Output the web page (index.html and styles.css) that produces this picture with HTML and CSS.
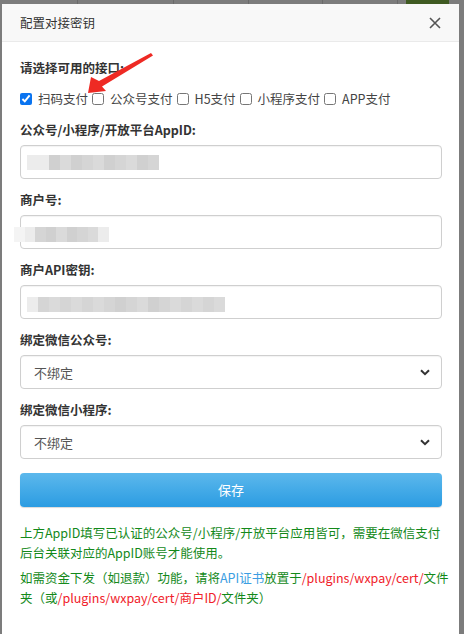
FILE: index.html
```html
<!DOCTYPE html>
<html lang="zh-CN">
<head>
<meta charset="utf-8">
<title>配置对接密钥</title>
<link rel="stylesheet" href="styles.css">
</head>
<body>
<div class="backdrop-strip">
  <div class="cell c1"></div>
  <div class="cell c2"></div>
  <div class="cell c3"></div>
  <div class="cell c4"></div>
  <div class="cell c5"></div>
  <div class="cell c6"></div>
  <div class="strip-btn"></div>
</div>
<div class="modal">
  <div class="modal-header">
    <span class="modal-title">配置对接密钥</span>
    <svg class="close" width="12" height="12" viewBox="0 0 12 12"><path d="M1 1L11 11M11 1L1 11" stroke="#555" stroke-width="1.6" fill="none"/></svg>
  </div>
  <div class="modal-body">
    <div class="section-title">请选择可用的接口:</div>
    <div class="check-row">
      <input type="checkbox" class="cb" checked><span class="cb-label">扫码支付</span>
      <input type="checkbox" class="cb"><span class="cb-label">公众号支付</span>
      <input type="checkbox" class="cb"><span class="cb-label">H5支付</span>
      <input type="checkbox" class="cb"><span class="cb-label">小程序支付</span>
      <input type="checkbox" class="cb"><span class="cb-label">APP支付</span>
    </div>

    <div class="group">
      <div class="label">公众号/小程序/开放平台AppID:</div>
      <div class="input">
        <div class="mosaic m1">
          <span class="b l1"></span><span class="b l1"></span><span class="b d1"></span><span class="b d2"></span><span class="b d1"></span><span class="b d3"></span><span class="b d2"></span><span class="b d1"></span><span class="b d3"></span><span class="b d2"></span><span class="b d1"></span><span class="b d3"></span>
        </div>
      </div>
    </div>

    <div class="group">
      <div class="label">商户号:</div>
      <div class="input">
        <div class="mosaic m2">
          <span class="b l2"></span><span class="b l1"></span><span class="b d3"></span><span class="b d1"></span><span class="b d2"></span><span class="b d1"></span><span class="b d3"></span><span class="b d2"></span><span class="b l1"></span>
        </div>
      </div>
    </div>

    <div class="group">
      <div class="label">商户API密钥:</div>
      <div class="input">
        <div class="mosaic m3">
          <span class="b l1"></span><span class="b d3"></span><span class="b d2"></span><span class="b d3"></span><span class="b d2"></span><span class="b d3"></span><span class="b d2"></span><span class="b d3"></span><span class="b d1"></span><span class="b d3"></span><span class="b d2"></span><span class="b d1"></span><span class="b d3"></span><span class="b d2"></span><span class="b d3"></span><span class="b d2"></span><span class="b d3"></span><span class="b d2"></span>
        </div>
      </div>
    </div>

    <div class="group">
      <div class="label">绑定微信公众号:</div>
      <div class="select">
        <span>不绑定</span>
        <svg width="10" height="7" viewBox="0 0 10 7"><path d="M1 1.2L5 5.2L9 1.2" stroke="#333" stroke-width="2" fill="none"/></svg>
      </div>
    </div>

    <div class="group">
      <div class="label">绑定微信小程序:</div>
      <div class="select">
        <span>不绑定</span>
        <svg width="10" height="7" viewBox="0 0 10 7"><path d="M1 1.2L5 5.2L9 1.2" stroke="#333" stroke-width="2" fill="none"/></svg>
      </div>
    </div>

    <div class="btn">保存</div>

    <p class="note">上方AppID填写已认证的公众号/小程序/开放平台应用皆可，需要在微信支付<br>后台关联对应的AppID账号才能使用。</p>
    <p class="note second">如需资金下发（如退款）功能，请将<span class="link">API证书</span>放置于<span class="red">/plugins/wxpay/cert/</span>文件<br>夹（或<span class="red">/plugins/wxpay/cert/商户ID/</span>文件夹）</p>
  </div>
</div>
<svg class="arrow" width="464" height="120" viewBox="0 0 464 120">
  <polygon points="88,93 91,77 99,81 151,53 153,55.5 102,86.5 106,91" fill="#ee2a24"/>
</svg>
</body>
</html>
```
FILE: styles.css
```css
html, body {
  margin: 0;
  padding: 0;
  width: 464px;
  height: 634px;
  overflow: hidden;
}
body {
  background: #7c7c7c;
  font-family: "Noto Sans CJK SC", "Noto Sans", sans-serif;
  font-size: 13px;
  color: #333;
  position: relative;
}
.backdrop-strip {
  height: 4px;
  display: flex;
}
.cell {
  border-right: 1px solid #6a6a6a;
}
.c1 { width: 77px; }
.c2 { width: 95px; }
.c3 { width: 74px; }
.c4 { width: 73px; }
.c5 { width: 74px; }
.c6 { width: 8px; border-right: none; }
.strip-btn {
  width: 43px;
  background: #3f5a22;
}
.modal {
  margin-left: 2px;
  width: 457px;
  height: 640px;
  background: #fff;
}
.modal-header {
  height: 37px;
  background: #f8f8f8;
  border-bottom: 1px solid #eaeaea;
  display: flex;
  align-items: center;
  justify-content: space-between;
  padding: 0 17px 0 18px;
}
.modal-title {
  font-size: 12.5px;
  color: #333;
}
.close {
  margin-top: 1px;
  margin-right: 1px;
}
.modal-body {
  padding: 16px 17px 0 18px;
}
.section-title {
  font-weight: 700;
  font-size: 12.5px;
  line-height: 20px;
  margin-bottom: 10px;
}
.check-row {
  display: flex;
  align-items: center;
  height: 20px;
  margin-bottom: 12px;
  color: #444;
  font-size: 12.5px;
}
.cb {
  width: 12px;
  height: 12px;
  margin: 1px 0 0 0;
  accent-color: #0a74f0;
}
.cb:not(:first-child) {
  margin-left: 4px;
}
.cb-label {
  margin-left: 6px;
}
.group {
  margin-bottom: 11px;
}
.label {
  font-weight: 700;
  font-size: 12.5px;
  line-height: 20px;
  margin-bottom: 5px;
}
.input, .select {
  height: 32px;
  border: 1px solid #cfcfcf;
  border-radius: 4px;
  background: #fff;
  box-shadow: inset 0 1px 1px rgba(0,0,0,0.05);
  display: flex;
  align-items: center;
  box-sizing: content-box;
}
.mosaic {
  display: flex;
  height: 15px;
}
.m1 { margin-left: 6px; margin-top: 1px; }
.m2 { margin-left: -7px; margin-top: 5px; }
.m3 { margin-left: 6px; margin-top: 5px; }
.b {
  width: 11px;
  height: 15px;
}
.m2 .b { width: 10.5px; }
.l1 { background: #ececec; }
.l2 { background: #f4f4f4; }
.d1 { background: #d0d0d0; }
.d2 { background: #dadada; }
.d3 { background: #d5d5d5; }
.select {
  justify-content: space-between;
  padding: 0 11px 0 13px;
  color: #555;
}
.select svg {
  margin-top: 1px;
}
.btn {
  margin-top: 14px;
  height: 34px;
  border-radius: 4px;
  background: linear-gradient(#5cb8ec, #2b9ce2);
  color: #fff;
  display: flex;
  align-items: center;
  justify-content: center;
  font-size: 13px;
  padding-bottom: 2px;
  box-sizing: border-box;
  box-shadow: 0 1px 1px rgba(0,0,0,0.15);
}
.note {
  margin: 16px 0 0 0;
  color: #13891a;
  font-size: 12.5px;
  line-height: 20px;
  white-space: nowrap;
}
.note.second {
  margin-top: 5px;
}
.link {
  color: #3c9ee2;
}
.red {
  color: #f0212a;
}
.arrow {
  position: absolute;
  left: 0;
  top: 0;
  pointer-events: none;
}
```
